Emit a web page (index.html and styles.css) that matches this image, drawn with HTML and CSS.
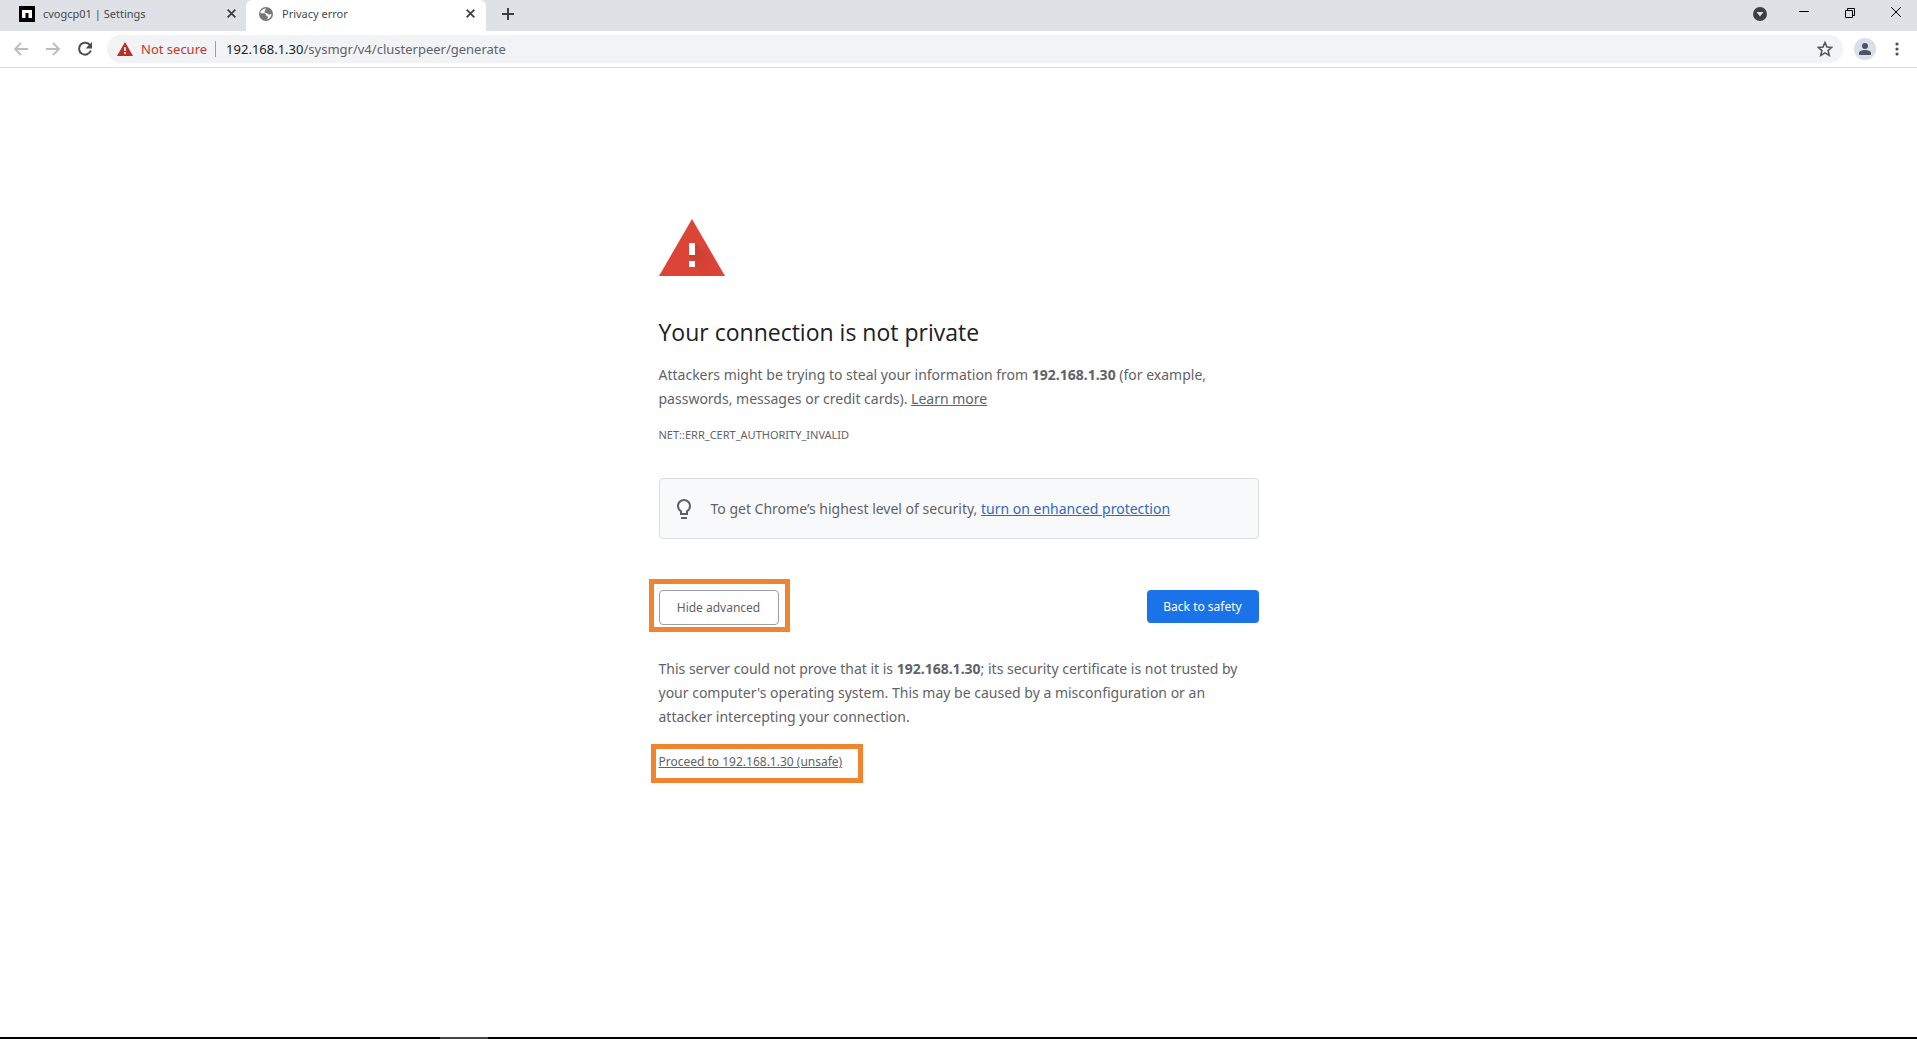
FILE: index.html
```html
<!DOCTYPE html>
<html lang="en">
<head>
<meta charset="utf-8">
<title>Privacy error</title>
<link rel="stylesheet" href="styles.css">
</head>
<body>
<header>
  <div class="tabstrip">
    <div class="tab">
      <svg class="icon" viewBox="0 0 16 16"><path fill="#000" d="M0 0h16v16H0z"/><path fill="#fff" d="M3 4h10v8H9.500V7h-3v5H3z"/></svg>
      <span class="tab-title">cvogcp01 | Settings</span>
      <button class="close" aria-label="Close tab"><svg viewBox="0 0 10 10"><path d="M1.500 1.500l7 7m0-7l-7 7" stroke="#3c4043" stroke-width="1.600"/></svg></button>
    </div>
    <div class="tab active">
      <svg class="icon" viewBox="0 0 16 16"><circle cx="8" cy="8" r="7" fill="#757779"/><path fill="#fff" d="M8.500 2.500c-.8.300-1.500 1-1.300 1.800.2.700-.7 1-.7 1.700 0 .8 1 1 2 1 1.200 0 1.200 1.600 2.200 1.600 1 0 1.300-.6 2.800-.4-.2 2.300-2 4.700-4.500 5.200.4-1.200 1.200-1.500.8-2.700-.4-1-2-.9-2-2.200 0-1-.8-1.300-1.800-1.300H2.300C2.400 5 4.500 2.400 8.500 2.500z"/></svg>
      <span class="tab-title">Privacy error</span>
      <button class="close" aria-label="Close tab"><svg viewBox="0 0 10 10"><path d="M1.500 1.500l7 7m0-7l-7 7" stroke="#3c4043" stroke-width="1.600"/></svg></button>
    </div>
    <button class="new-tab" aria-label="New tab"><svg viewBox="0 0 12 12"><path d="M6 0v12M0 6h12" stroke="#3c4043" stroke-width="2"/></svg></button>
    <div class="window-controls">
      <button aria-label="Search tabs"><svg viewBox="0 0 14 14"><circle cx="7" cy="7" r="7" fill="#3c4043"/><path d="M3.500 5h7L7 9.500z" fill="#dee1e6"/></svg></button>
      <button aria-label="Minimize"><svg viewBox="0 0 10 14"><path d="M0 4.500h10" stroke="#000"/></svg></button>
      <button aria-label="Restore"><svg viewBox="0 0 10 14"><path d="M.5 3.500h7v7h-7zM2.500 3.500v-2h7v7h-2" fill="none" stroke="#000"/></svg></button>
      <button aria-label="Close"><svg viewBox="0 0 10 14"><path d="M0 0l10 10M10 0L0 10" stroke="#000"/></svg></button>
    </div>
  </div>
  <div class="toolbar">
    <nav class="nav-buttons">
      <button aria-label="Back"><svg viewBox="0 0 16 16"><path d="M15 8H2M8 2L2 8l6 6" fill="none" stroke="#babcbe" stroke-width="1.800"/></svg></button>
      <button aria-label="Forward"><svg viewBox="0 0 16 16"><path d="M1 8h13M8 2l6 6-6 6" fill="none" stroke="#babcbe" stroke-width="1.800"/></svg></button>
      <button aria-label="Reload"><svg viewBox="0 0 16 16"><path d="M13.300 4.700A6 6 0 1 0 13.800 9.500" fill="none" stroke="#4a4d51" stroke-width="2"/><path d="M15 1v6.500H8.500z" fill="#4a4d51"/></svg></button>
    </nav>
    <div class="omnibox">
      <svg class="warning" viewBox="0 0 16 14"><path d="M8 0l8 14H0z" fill="#b93027"/><path d="M7.200 5h1.600v4H7.200zM7.200 10h1.600v2H7.200z" fill="#fff"/></svg>
      <span class="not-secure">Not secure</span>
      <span class="url"><span class="host">192.168.1.30</span>/sysmgr/v4/clusterpeer/generate</span>
      <button class="star" aria-label="Bookmark this tab"><svg viewBox="0 0 14 14"><path d="M7 1.300l1.700 3.900 4.200.4-3.200 2.800 1 4.200L7 10.400l-3.700 2.200 1-4.200L1.100 5.600l4.200-.4z" fill="none" stroke="#55585d" stroke-width="1.400"/></svg></button>
    </div>
    <button class="profile" aria-label="Profile"><svg viewBox="0 0 22 22"><circle cx="11" cy="11" r="11" fill="#dadfe9"/><circle cx="11" cy="8" r="3" fill="#4e5368"/><path d="M5 17v-2c0-2 3-3 6-3s6 1 6 3v2z" fill="#4e5368"/></svg></button>
    <button class="menu" aria-label="Menu"><svg viewBox="0 0 4 14"><g fill="#4a4d51"><circle cx="2" cy="2" r="1.600"/><circle cx="2" cy="7" r="1.600"/><circle cx="2" cy="12" r="1.600"/></g></svg></button>
  </div>
</header>
<main>
  <svg class="alert" viewBox="0 0 66 57"><defs><linearGradient id="shade" x1="0" y1="0" x2="1" y2="1"><stop offset="0" stop-color="#a83a30" stop-opacity=".6"/><stop offset=".6" stop-color="#c94135" stop-opacity=".3"/><stop offset="1" stop-color="#db4437" stop-opacity="0"/></linearGradient></defs><path d="M33 0l33 57H0z" fill="#db4437"/><path d="M36 24l18 18 9 15H45l-9-9-6-12z" fill="url(#shade)"/><path d="M30 24h6v12h-6zM30 42h6v6h-6z" fill="#fff"/></svg>
  <h1>Your connection is not private</h1>
  <p>Attackers might be trying to steal your information from <strong>192.168.1.30</strong> (for example, passwords, messages or credit cards). <a href="#">Learn more</a></p>
  <div class="error-code">NET::ERR_CERT_AUTHORITY_INVALID</div>
  <div class="promo">
    <svg viewBox="0 0 24 24"><path fill="#5f6368" d="M12 2c-3.900 0-7 3.100-7 7 0 2.400 1.200 4.500 3 5.700V18h8v-3.300c1.800-1.200 3-3.300 3-5.700 0-3.900-3.100-7-7-7zm2.800 11.100-.8.600V16h-4v-2.300l-.8-.6A5 5 0 1 1 14.800 13.100zM9 20h6v2H9z"/></svg>
    <span>To get Chrome’s highest level of security, <a href="#">turn on enhanced protection</a></span>
  </div>
  <div class="actions">
    <span class="marked marked-button"><button class="secondary">Hide advanced</button></span>
    <button class="primary">Back to safety</button>
  </div>
  <p>This server could not prove that it is <strong>192.168.1.30</strong>; its security certificate is not trusted by your computer's operating system. This may be caused by a misconfiguration or an attacker intercepting your connection.</p>
  <div class="proceed"><span class="marked marked-link"><a href="#">Proceed to 192.168.1.30 (unsafe)</a></span></div>
</main>
<footer><span></span></footer>
</body>
</html>
```
FILE: styles.css
```css
* { box-sizing: border-box; }
body {
  margin: 0;
  min-height: 100vh;
  display: flex;
  flex-direction: column;
  background: #fff;
  color: #5f6368;
  font-family: "Noto Sans", "Open Sans", sans-serif;
  font-size: 13px;
}
button { border: 0; padding: 0; background: none; font: inherit; color: inherit; }
svg { display: block; flex: none; }
a { color: inherit; }

.tabstrip { display: flex; height: 31px; padding-left: 6px; background: #dee1e6; }
.tab { display: flex; align-items: center; width: 240px; height: 31px; padding: 0 9px 4px 13px; font-size: 11px; color: #45494d; }
.tab.active { background: #fff; border-radius: 6px 6px 0 0; padding-left: 12px; padding-right: 10px; }
.icon { width: 16px; height: 16px; }
.tab-title { flex: 1; margin-left: 8px; white-space: nowrap; }
.close svg { width: 11px; height: 11px; }
.new-tab { margin-left: 16px; padding-bottom: 3px; }
.new-tab svg { width: 12px; height: 12px; }
.window-controls { display: flex; align-items: center; gap: 36px; margin-left: auto; padding: 0 16px 3px 0; }
.window-controls button:first-child { margin-right: -4px; }
.window-controls svg { height: 14px; }

.toolbar { display: flex; align-items: center; height: 37px; padding: 0 18px 0 13px; border-bottom: 1px solid #dadce0; }
.nav-buttons { display: flex; gap: 16px; }
.nav-buttons svg { width: 16px; height: 16px; }
.omnibox { flex: 1; display: flex; align-items: center; height: 28px; margin-left: 14px; padding: 0 10px; border-radius: 14px; background: #f1f3f4; }
.warning { width: 16px; height: 14px; }
.not-secure { margin-left: 8px; padding-right: 8px; border-right: 1px solid #9aa0a6; color: #c5362c; line-height: 16px; }
.url { flex: 1; margin-left: 10px; color: #5f6368; }
.host { color: #202124; }
.star svg { width: 16px; height: 16px; }
.profile { margin-left: 11px; }
.profile svg { width: 22px; height: 22px; }
.menu { margin-left: 19px; }
.menu svg { width: 4px; height: 14px; }

main { flex: 1; width: 100%; max-width: 600px; margin: 0 auto; padding-top: 151px; font-size: 14px; line-height: 24px; }
.alert { width: 66px; height: 57px; }
h1 { margin: 40px 0 15px; font-family: "Open Sans", "Noto Sans", sans-serif; font-size: 23px; font-weight: 400; line-height: 32px; color: #202124; }
p { margin: 0; padding-right: 8px; }
.error-code { margin-top: 15px; font-size: 11px; line-height: 18px; }
.promo { display: flex; align-items: center; gap: 15px; height: 61px; margin-top: 34px; padding: 0 12px; border: 1px solid #dadce0; border-radius: 4px; background: #f8f9fa; }
.promo svg { width: 24px; height: 24px; }
.promo a { color: #3368bd; }
.actions { display: flex; justify-content: space-between; align-items: flex-start; margin: 51px 0 32px; font-size: 12px; line-height: 16px; }
.marked { position: relative; display: inline-block; }
.marked::after { content: ""; position: absolute; pointer-events: none; border: 5px solid #f08430; }
.marked-button::after { inset: -11px -11px -7px -10px; }
.marked-link::after { inset: -6px -21px -9px -8px; }
.secondary { display: block; width: 120px; height: 35px; border: 1px solid #9aa0a6; border-radius: 4px; }
.primary { width: 112px; height: 33px; border-radius: 4px; background: #1a73e8; color: #fff; }
.proceed { margin-top: 21px; font-size: 12px; }
footer { height: 2px; background: #000; }
footer span { display: block; width: 48px; height: 2px; margin-left: 440px; background: #444; }
```
